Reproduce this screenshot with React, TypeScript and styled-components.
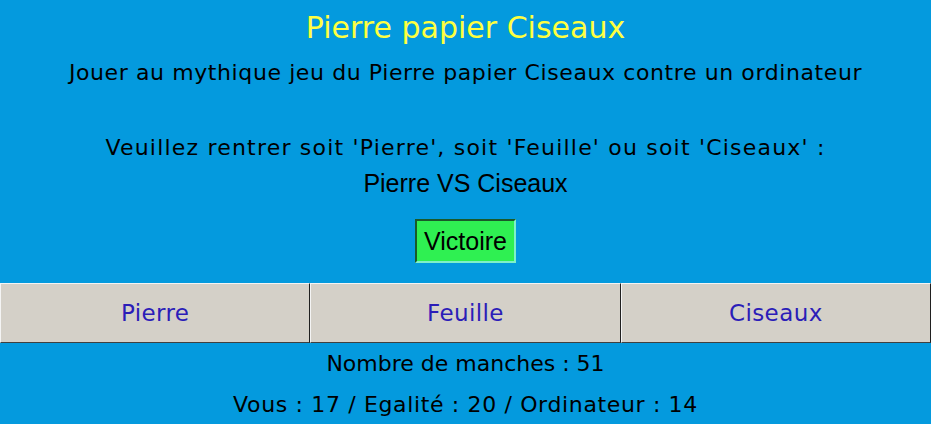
import React from "react";
import styled, { createGlobalStyle } from "styled-components";

const GlobalStyle = createGlobalStyle`
  html, body {
    margin: 0;
    padding: 0;
    background-color: #049ade;
  }
`;

const choices = ["Pierre", "Feuille", "Ciseaux"];

export default function App() {
  return (
    <>
      <GlobalStyle />
      <Page>
        <Title>Pierre papier Ciseaux</Title>
        <Intro>Jouer au mythique jeu du Pierre papier Ciseaux contre un ordinateur</Intro>
        <Prompt>Veuillez rentrer soit 'Pierre', soit 'Feuille' ou soit 'Ciseaux' :</Prompt>
        <Match>Pierre VS Ciseaux</Match>
        <ResultRow>
          <Result>Victoire</Result>
        </ResultRow>
        <Choices>
          {choices.map((c) => (
            <ChoiceButton key={c}>{c}</ChoiceButton>
          ))}
        </Choices>
        <Score $first>Nombre de manches : 51</Score>
        <Score $spacing={0.65}>Vous : 17 / Egalité : 20 / Ordinateur : 14</Score>
      </Page>
    </>
  );
}

const comic = `"Comic Sans MS", "DejaVu Sans", sans-serif`;

const Page = styled.div`
  display: flex;
  flex-direction: column;
  align-items: stretch;
  background-color: #049ade;
  min-height: 100vh;
  font-family: ${comic};
  text-align: center;
`;

const Title = styled.h1`
  margin: 8px 0 0;
  font-size: 30px;
  font-weight: normal;
  line-height: 40px;
  color: #ffff40;
`;

const Intro = styled.p`
  margin: 10px 0 0;
  font-size: 22px;
  letter-spacing: 0.6px;
  line-height: 30px;
  color: #000;
`;

const Prompt = styled.p`
  margin: 45px 0 0;
  font-size: 22px;
  letter-spacing: 1.2px;
  line-height: 30px;
  color: #000;
`;

const Match = styled.p`
  margin: 5px 0 0;
  font-family: "Liberation Sans", Arial, sans-serif;
  font-size: 25px;
  line-height: 30px;
  color: #000;
`;

const ResultRow = styled.div`
  display: flex;
  justify-content: center;
  margin-top: 21px;
`;

const Result = styled.div`
  box-sizing: border-box;
  width: 101px;
  height: 44px;
  display: flex;
  align-items: center;
  justify-content: center;
  background-color: #2ff052;
  border: 2px solid;
  border-color: #1a5a2a #7ff0c8 #7ff0c8 #1a5a2a;
  font-family: "Liberation Sans", Arial, sans-serif;
  font-size: 25px;
  color: #000;
`;

const Choices = styled.div`
  display: grid;
  grid-template-columns: repeat(3, 1fr);
  margin-top: 20px;
  width: 931px;
`;

const ChoiceButton = styled.button`
  box-sizing: border-box;
  height: 60px;
  margin: 0;
  padding: 0;
  background-color: #d4d0c8;
  border: 1px solid;
  border-color: #f4f4f4 #202020 #404040 #f4f4f4;
  font-family: ${comic};
  font-size: 23px;
  letter-spacing: 0.4px;
  color: #2b1db8;
  cursor: pointer;
`;

const Score = styled.p<{ $first?: boolean; $spacing?: number }>`
  margin: ${(p) => (p.$first ? "2px" : "4px")} 0 0;
  font-size: 22px;
  letter-spacing: ${(p) => p.$spacing ?? 0}px;
  line-height: 37px;
  color: #000;
`;
